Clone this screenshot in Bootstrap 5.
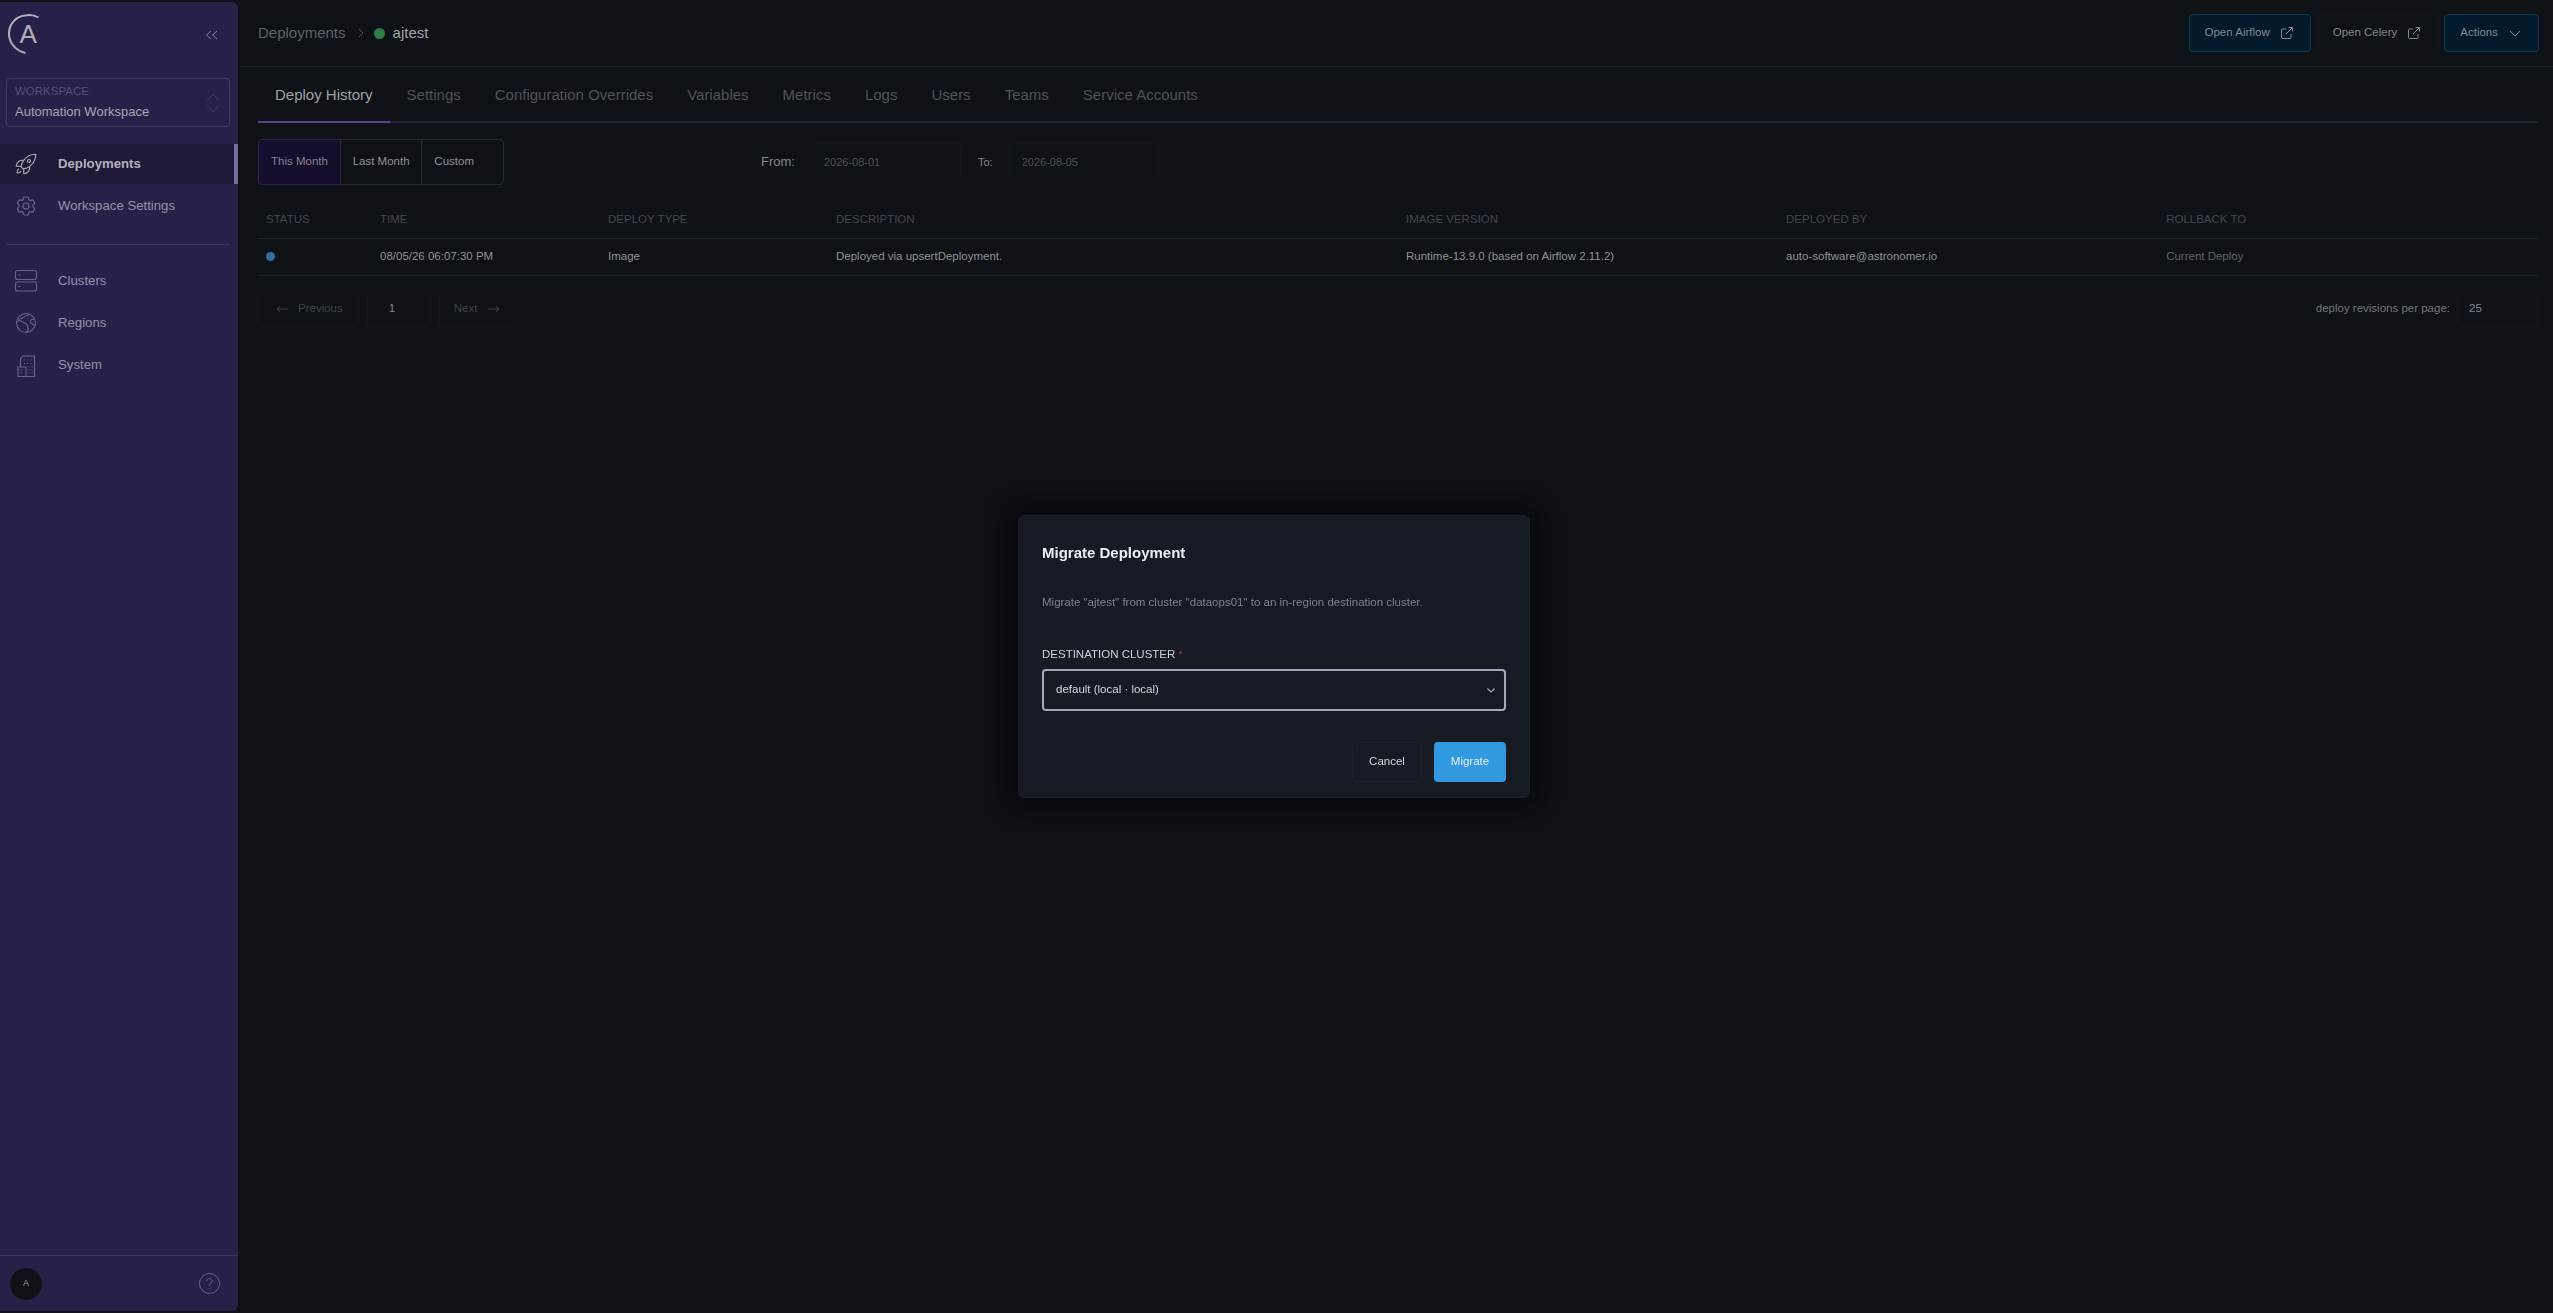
<!DOCTYPE html>
<html lang="en">
<head>
  <meta charset="UTF-8">
  <title>Deployments - ajtest</title>
  <link href="https://cdn.jsdelivr.net/npm/bootstrap@5.3.3/dist/css/bootstrap.min.css" rel="stylesheet">
  <style>
    html, body { height: 100%; }
    body {
      background-color: #0e1116;
      font-family: "Liberation Sans", Arial, sans-serif;
      font-size: 11.5px;
      color: #a6a9ae;
      overflow: hidden;
    }
    svg { display: block; flex: none; }

    /* sidebar */
    .app-shell { height: 1313px; }
    .side-rail {
      width: 238px;
      flex: none;
      margin: 2px 0;
      background-color: #272048;
      border-radius: 0 6px 6px 0;
      color: #9d98ac;
    }
    .side-top { height: 76px; padding: 12px 20px 0 8px; }
    .side-collapse { color: #857ea3; }
    .ws-picker {
      height: 49px;
      margin: 0 8px 17px 6px;
      padding: 7px 9px 7px 8px;
      border: 1px solid #413a62;
      border-radius: 4px;
    }
    .ws-label { font-size: 11.5px; line-height: 13px; color: #58516f; }
    .ws-name { font-size: 13px; line-height: 16px; margin-top: 6px; color: #a9a5b5; }
    .side-link {
      height: 40px;
      padding-left: 14px;
      gap: 20px;
      font-size: 13.200px;
      color: #9792a8;
      margin-bottom: 2px;
    }
    .side-link.is-on {
      background-color: #1d1936;
      border-right: 4px solid #766e9d;
      color: #b4b1bd;
      font-weight: 700;
    }
    .side-ico { width: 24px; height: 24px; color: #6b6390; }
    .is-on .side-ico { color: #aca8b6; }
    .side-rule { border-top: 1px solid #3c3560; margin: 16px 8px 16px 6px; }
    .side-foot {
      height: 56px;
      border-top: 1px solid #3c3560;
      padding: 0 18px 0 10px;
    }
    .side-avatar {
      width: 32px;
      height: 32px;
      background-color: #0f1116;
      color: #a0a0a4;
      font-size: 9px;
    }

    /* header and tabs */
    .page-main { min-width: 0; padding-left: 3px; }
    .page-head {
      height: 67px;
      padding: 0 14px 0 17px;
      border-bottom: 1px solid #1b222c;
    }
    .crumb { font-size: 15px; color: #5c616a; }
    .crumb-sep { margin: 0 10px 0 12px; }
    .crumb-now { color: #a2a5aa; }
    .crumb-dot { width: 11px; height: 11px; background-color: #2f7d47; }
    .head-btn {
      height: 38px;
      padding: 0 17px 0 15px;
      gap: 11px;
      font-size: 11.5px;
      color: #80868d;
      background-color: transparent;
      border: 1px solid #13171d;
      border-radius: 4px;
    }
    .head-btn.is-blue { background-color: #021a2b; border-color: #0c3a55; color: #7d8a95; }
    .head-btn.is-blue:hover, .head-btn:hover { color: #7d8a95; }
    .head-gap { gap: 6px; }
    .tab-row {
      margin: 0 15px 0 17px;
      border-bottom: 2px solid #1d2530;
      height: 56px;
    }
    .tab-row .nav-link {
      height: 56px;
      line-height: 56px;
      padding: 0 17px;
      font-size: 15px;
      color: #4e535c;
      border-bottom: 2px solid transparent;
    }
    .tab-row .nav-link.active { color: #9fa2a8; border-bottom-color: #56408f; }

    /* filter row */
    .filter-row { margin: 16px 15px 0 17px; height: 46px; }
    .range-group { width: 246px; margin-right: 257px; }
    .range-group .btn {
      width: 82px;
      height: 46px;
      font-size: 11.5px;
      color: #8e9196;
      border: 1px solid #232a35;
      background: transparent;
      text-align: left;
      padding: 0 0 0 12px;
      border-radius: 4px;
      white-space: nowrap;
    }
    .range-group .btn.is-on { background-color: #140e2c; border-color: #2c2455; color: #85828f; }
    .date-lbl { font-size: 13px; color: #85888e; margin-right: 16px; }
    .date-lbl.is-to { font-size: 11px; margin-left: 17px; }
    .date-box {
      width: 150px;
      height: 38px;
      padding: 0 12px;
      font-size: 11px;
      color: #4b5058;
      border: 1px solid #13161c;
      border-radius: 4px;
    }

    /* table */
    .hist-wrap { margin: 16px 15px 0 17px; }
    .hist-table {
      table-layout: fixed;
      --bs-table-bg: transparent;
      --bs-table-color: #8e9196;
      --bs-table-border-color: #1b222c;
      margin: 0;
      font-size: 11.5px;
    }
    .hist-table th, .hist-table td { padding: 0 8px; vertical-align: middle; }
    .hist-table th { height: 37px; font-weight: 400; color: #424750; text-transform: uppercase; }
    .hist-table td { height: 37px; }
    .hist-table td.is-dim { color: #5f6369; }
    .stat-dot { width: 9px; height: 9px; background-color: #2f6f9e; }

    /* pager */
    .pager-row { margin: 16px 15px 0 17px; }
    .pager-box {
      height: 35px;
      border: 1px solid #13161c;
      border-radius: 4px;
      padding: 0 14px 0 17px;
      gap: 10px;
      color: #3e4249;
    }
    .pager-box.is-next { margin-left: 9px; padding: 0 16px 0 14px; gap: 11px; }
    .pager-num { width: 63px; color: #85888e; margin-left: 9px; padding-left: 21px; }
    .per-lbl { color: #73767c; }
    .per-box { width: 80px; color: #85888e; padding-left: 10px; }

    /* modal */
    .modal.migrate-modal { display: block; padding-right: 5px; }
    .migrate-modal .modal-dialog { max-width: 512px; }
    .migrate-modal .modal-content {
      background-color: #161a23;
      border: 1px solid #1d212b;
      border-radius: 6px;
      padding: 25px 23px 15px;
      box-shadow: 0 0 24px 8px rgba(5, 6, 10, .8);
      color: #d5d7dc;
    }
    .migrate-title { font-size: 15px; font-weight: 700; color: #eceef1; margin: 0; line-height: 24px; }
    .migrate-copy { font-size: 11.5px; color: #7d828c; margin: 29px 0 0; line-height: 16px; }
    .migrate-label { font-size: 11.5px; color: #cfd2d7; margin: 36px 0 0; line-height: 16px; display: block; }
    .req-star { color: #b13c32; font-size: 9px; vertical-align: top; }
    .migrate-select {
      height: 42px;
      margin-top: 7px;
      padding: 0 9px 0 12px;
      background-color: #161a23;
      border: 2px solid #a3aabc;
      border-radius: 4px;
      color: #d5d7dc;
    }
    .migrate-foot { margin-top: 31px; gap: 12px; }
    .migrate-foot .btn { height: 40px; font-size: 11.5px; padding: 0; border-radius: 4px; }
    .btn-cancel { width: 70px; color: #d5d7dc; border: 1px solid #1d212b; background: transparent; }
    .btn-go { width: 72px; color: #e6eef6; background-color: #329ae0; border: 0; }
  </style>
</head>
<body>

<div class="app-shell d-flex">

  <!-- Sidebar -->
  <aside class="side-rail d-flex flex-column">
    <div class="side-top d-flex justify-content-between align-items-start">
      <svg width="32" height="42" viewBox="0 0 32 42" fill="none" stroke="#b3afb8" stroke-width="2">
        <path d="M30.5 3.5A19 19 0 0 0 17 1.6C7.5 2.5.8 10.5 1 20c.2 9.200 7 17 16.500 19"/>
        <text x="11.500" y="29" font-family="Liberation Sans, sans-serif" font-size="26" fill="#b3afb8" stroke="none">A</text>
      </svg>
      <svg class="side-collapse mt-3" width="13" height="10" viewBox="0 0 13 10" fill="none" stroke="currentColor"><path d="M6 1 1.500 5 6 9M12 1 7.500 5 12 9"/></svg>
    </div>

    <div class="ws-picker d-flex justify-content-between align-items-center">
      <div>
        <div class="ws-label">WORKSPACE</div>
        <div class="ws-name">Automation Workspace</div>
      </div>
      <svg width="14" height="20" viewBox="0 0 14 20" fill="none" stroke="#413a62"><path d="M1 7.500 7 1l6 6.500M1 12.500 7 19l6-6.500"/></svg>
    </div>

    <a class="side-link is-on d-flex align-items-center text-decoration-none" href="#">
      <svg class="side-ico" viewBox="0 0 24 24" fill="none" stroke="currentColor" stroke-width="1.200" stroke-linejoin="round"><path d="M15.590 14.370a6 6 0 0 1-5.840 7.380v-4.800m5.840-2.580a14.980 14.980 0 0 0 6.160-12.120A14.980 14.980 0 0 0 9.631 8.410m5.960 5.960a14.926 14.926 0 0 1-5.841 2.580m-.119-8.540a6 6 0 0 0-7.381 5.840h4.800m2.581-5.840a14.927 14.927 0 0 0-2.580 5.840m2.699 2.700c-.103.021-.207.041-.311.060a15.090 15.090 0 0 1-2.448-2.448 14.900 14.900 0 0 1 .060-.312m-2.240 2.390a4.493 4.493 0 0 0-1.757 4.306 4.493 4.493 0 0 0 4.306-1.758M16.500 9a1.500 1.500 0 1 1-3 0 1.500 1.500 0 0 1 3 0Z"/></svg>
      <span>Deployments</span>
    </a>
    <a class="side-link d-flex align-items-center text-decoration-none" href="#">
      <svg class="side-ico" viewBox="0 0 24 24" fill="none" stroke="currentColor" stroke-width="1.200"><path d="M9.594 3.940c.090-.542.560-.940 1.110-.940h2.593c.550 0 1.020.398 1.110.940l.213 1.281c.063.374.313.686.645.870.074.040.147.083.220.127.325.196.720.257 1.075.124l1.217-.456a1.125 1.125 0 0 1 1.370.490l1.296 2.247a1.125 1.125 0 0 1-.260 1.431l-1.003.827c-.293.241-.438.613-.430.992a7.723 7.723 0 0 1 0 .255c-.008.378.137.750.430.991l1.004.827c.424.350.534.955.260 1.430l-1.298 2.247a1.125 1.125 0 0 1-1.369.491l-1.217-.456c-.355-.133-.750-.072-1.076.124a6.470 6.470 0 0 1-.220.128c-.331.183-.581.495-.644.869l-.213 1.281c-.090.543-.560.940-1.110.940h-2.594c-.550 0-1.019-.398-1.110-.940l-.213-1.281c-.062-.374-.312-.686-.644-.870a6.520 6.520 0 0 1-.220-.127c-.325-.196-.720-.257-1.076-.124l-1.217.456a1.125 1.125 0 0 1-1.369-.490l-1.297-2.247a1.125 1.125 0 0 1 .260-1.431l1.004-.827c.292-.240.437-.613.430-.991a6.932 6.932 0 0 1 0-.255c.007-.380-.138-.751-.430-.992l-1.004-.827a1.125 1.125 0 0 1-.260-1.430l1.297-2.247a1.125 1.125 0 0 1 1.370-.491l1.216.456c.356.133.751.072 1.076-.124.072-.044.146-.086.220-.128.332-.183.582-.495.644-.869l.214-1.280Z"/><path d="M15 12a3 3 0 1 1-6 0 3 3 0 0 1 6 0Z"/></svg>
      <span>Workspace Settings</span>
    </a>

    <div class="side-rule"></div>

    <a class="side-link d-flex align-items-center text-decoration-none" href="#">
      <svg class="side-ico" viewBox="0 0 24 24" fill="none" stroke="currentColor" stroke-width="1.100"><rect x="1.500" y="1.500" width="21" height="9" rx="2"/><rect x="1.500" y="13" width="21" height="9" rx="2"/><path d="M4.500 6h2M4.500 17.500h2"/></svg>
      <span>Clusters</span>
    </a>
    <a class="side-link d-flex align-items-center text-decoration-none" href="#">
      <svg class="side-ico" viewBox="0 0 24 24" fill="none" stroke="currentColor" stroke-width="1.100"><circle cx="12" cy="12" r="9.500"/><path d="M15.500 3.200c-1.500 1.800-4 1.300-5.500 3-1.200 1.400-3.200 1-4.300 2.100l-2.500 2.500M5 9c2 .8 4 2.600 6 3 2 .4 2.300 2.400 3 4 .6 1.300.2 3.500-1.200 5.400M21 14.500c-1.600-.8-3.300-1.600-4.300-2.800-1.200-1.500.3-3.200 2-3.300h1.100"/></svg>
      <span>Regions</span>
    </a>
    <a class="side-link d-flex align-items-center text-decoration-none" href="#">
      <svg class="side-ico" viewBox="0 0 24 24" fill="none" stroke="currentColor" stroke-width="1.100"><path d="M6.500 14V5.500L9 3h11.500v20.500H4v-9.500h8v9.500"/><path d="M10 7h1M13 7h1M16.500 7h1M10 10.500h1M13 10.500h1M16.500 10.500h1M14.500 14h1M17.500 14h1M14.500 17h1M17.500 17h1M14.500 20h1M17.500 20h1M6.500 17h1M6.500 20h1"/></svg>
      <span>System</span>
    </a>

    <div class="side-foot mt-auto d-flex justify-content-between align-items-center">
      <div class="side-avatar rounded-circle d-flex align-items-center justify-content-center">A</div>
      <svg width="21" height="21" viewBox="0 0 21 21" fill="none" stroke="#6b6390"><circle cx="10.500" cy="10.500" r="10"/><path d="M7.700 8.200c0-1.600 1.300-2.700 2.800-2.700s2.800 1.100 2.800 2.500c0 2.200-2.800 2.300-2.800 4.500M10.500 15v.8"/></svg>
    </div>
  </aside>

  <!-- Main panel -->
  <main class="page-main flex-grow-1">
    <header class="page-head d-flex justify-content-between align-items-center">
      <div class="crumb d-flex align-items-center">
        <span>Deployments</span>
        <svg class="crumb-sep" width="6" height="10" viewBox="0 0 6 10" fill="none" stroke="#4e535c"><path d="m1 1 4 4-4 4"/></svg>
        <span class="crumb-dot rounded-circle me-2"></span>
        <span class="crumb-now">ajtest</span>
      </div>
      <div class="d-flex head-gap">
        <a class="btn head-btn is-blue d-flex align-items-center" href="#">Open Airflow
          <svg width="12" height="12" viewBox="0 0 12 12" fill="none" stroke="currentColor"><path d="M5 2H1.500a1 1 0 0 0-1 1v7.500a1 1 0 0 0 1 1H9a1 1 0 0 0 1-1V7M7.500.5h4v4M11.500.5 5 7"/></svg>
        </a>
        <a class="btn head-btn d-flex align-items-center" href="#">Open Celery
          <svg width="12" height="12" viewBox="0 0 12 12" fill="none" stroke="currentColor"><path d="M5 2H1.500a1 1 0 0 0-1 1v7.500a1 1 0 0 0 1 1H9a1 1 0 0 0 1-1V7M7.500.5h4v4M11.500.5 5 7"/></svg>
        </a>
        <button class="btn head-btn is-blue d-flex align-items-center" type="button">Actions
          <svg width="12" height="7" viewBox="0 0 12 7" fill="none" stroke="currentColor"><path d="m1 1 5 5 5-5"/></svg>
        </button>
      </div>
    </header>

    <nav class="nav tab-row">
      <a class="nav-link active" href="#">Deploy History</a>
      <a class="nav-link" href="#">Settings</a>
      <a class="nav-link" href="#">Configuration Overrides</a>
      <a class="nav-link" href="#">Variables</a>
      <a class="nav-link" href="#">Metrics</a>
      <a class="nav-link" href="#">Logs</a>
      <a class="nav-link" href="#">Users</a>
      <a class="nav-link" href="#">Teams</a>
      <a class="nav-link" href="#">Service Accounts</a>
    </nav>

    <div class="filter-row d-flex align-items-center">
      <div class="btn-group range-group" role="group">
        <button class="btn is-on" type="button">This Month</button>
        <button class="btn" type="button">Last Month</button>
        <button class="btn" type="button">Custom</button>
      </div>
      <span class="date-lbl">From:</span>
      <div class="date-box d-flex align-items-center">2026-08-01</div>
      <span class="date-lbl is-to">To:</span>
      <div class="date-box d-flex align-items-center">2026-08-05</div>
    </div>

    <div class="hist-wrap">
      <table class="table hist-table">
        <colgroup>
          <col style="width:5%"><col style="width:10%"><col style="width:10%"><col style="width:25%"><col style="width:16.670%"><col style="width:16.670%"><col style="width:16.660%">
        </colgroup>
        <thead>
          <tr><th>Status</th><th>Time</th><th>Deploy Type</th><th>Description</th><th>Image Version</th><th>Deployed By</th><th>Rollback To</th></tr>
        </thead>
        <tbody>
          <tr>
            <td><div class="stat-dot rounded-circle"></div></td>
            <td>08/05/26 06:07:30 PM</td>
            <td>Image</td>
            <td>Deployed via upsertDeployment.</td>
            <td>Runtime-13.9.0 (based on Airflow 2.11.2)</td>
            <td>auto-software@astronomer.io</td>
            <td class="is-dim">Current Deploy</td>
          </tr>
        </tbody>
      </table>
    </div>

    <div class="pager-row d-flex align-items-center">
      <div class="pager-box d-flex align-items-center">
        <svg width="12" height="8" viewBox="0 0 12 8" fill="none" stroke="currentColor"><path d="M12 4H1M4 1 1 4l3 3"/></svg>
        <span>Previous</span>
      </div>
      <div class="pager-box pager-num d-flex align-items-center">1</div>
      <div class="pager-box is-next d-flex align-items-center">
        <span>Next</span>
        <svg width="12" height="8" viewBox="0 0 12 8" fill="none" stroke="currentColor"><path d="M0 4h11M8 1l3 3-3 3"/></svg>
      </div>
      <span class="per-lbl ms-auto me-2">deploy revisions per page:</span>
      <div class="pager-box per-box d-flex align-items-center">25</div>
    </div>
  </main>
</div>

<!-- Migrate modal -->
<div class="modal migrate-modal" tabindex="-1" aria-labelledby="migrateTitle">
  <div class="modal-dialog modal-dialog-centered">
    <form class="modal-content">
      <h5 class="migrate-title" id="migrateTitle">Migrate Deployment</h5>
      <p class="migrate-copy">Migrate "ajtest" from cluster "dataops01" to an in-region destination cluster.</p>
      <label class="migrate-label">DESTINATION CLUSTER <span class="req-star">*</span></label>
      <div class="migrate-select d-flex justify-content-between align-items-center">
        <span>default (local · local)</span>
        <svg width="8" height="5" viewBox="0 0 8 5" fill="none" stroke="#a3aabc" stroke-width="1.200"><path d="m.5.5 3.500 3.500L7.500.5"/></svg>
      </div>
      <div class="migrate-foot d-flex justify-content-end">
        <button type="button" class="btn btn-cancel">Cancel</button>
        <button type="button" class="btn btn-go">Migrate</button>
      </div>
    </form>
  </div>
</div>

<script src="https://cdn.jsdelivr.net/npm/bootstrap@5.3.3/dist/js/bootstrap.bundle.min.js"></script>
</body>
</html>
